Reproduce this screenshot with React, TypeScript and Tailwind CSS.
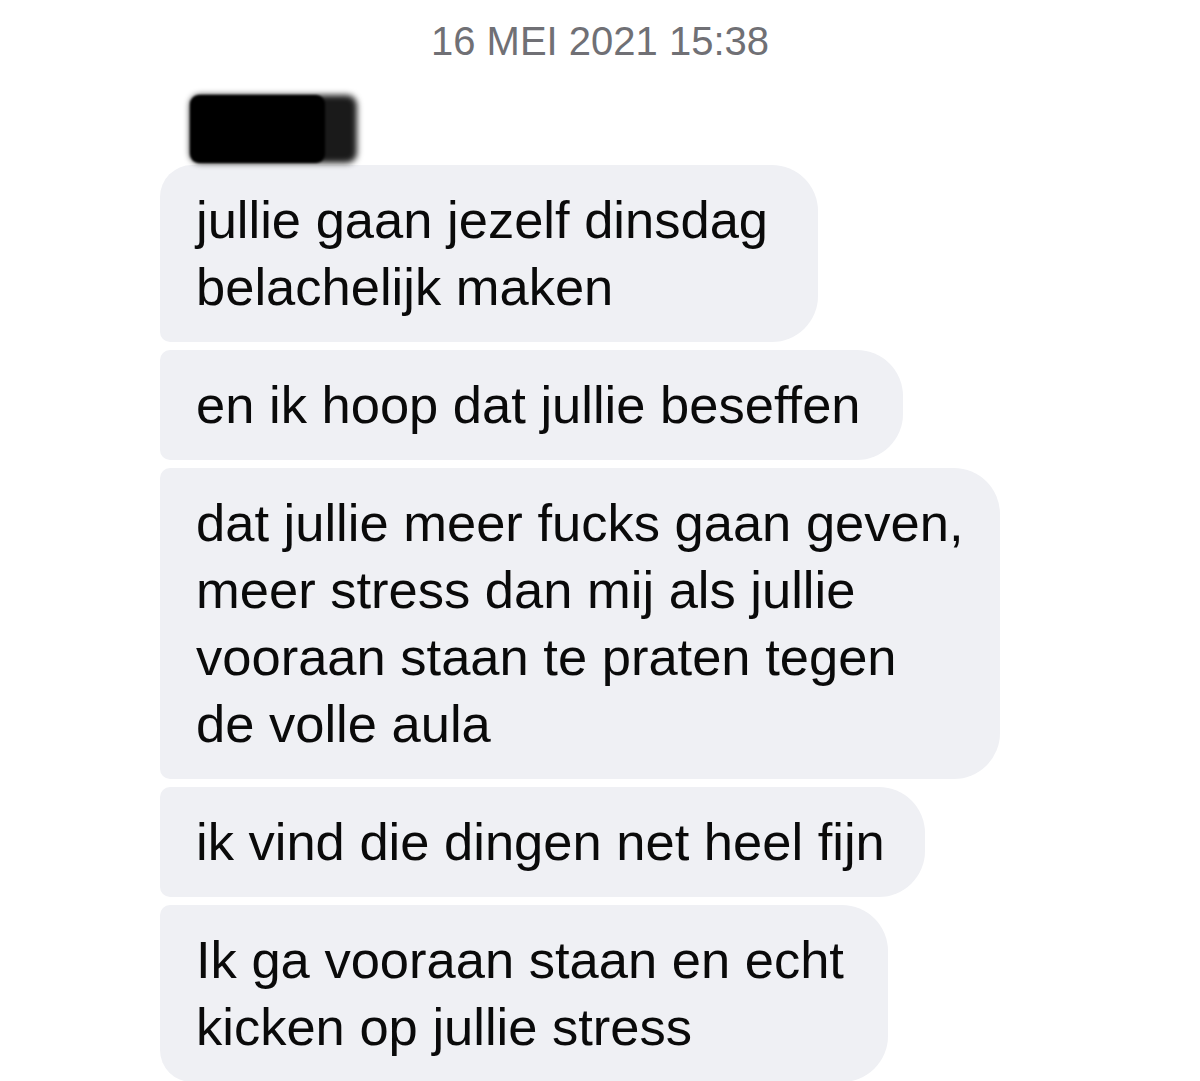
import React from 'react';

type Msg = {
  lines: string[];
  width: string;
  corners: string;
};

const messages: Msg[] = [
  {
    lines: ['jullie gaan jezelf dinsdag', 'belachelijk maken'],
    width: 'w-[658px]',
    corners: 'rounded-tl-[32px] rounded-tr-[46px] rounded-br-[46px] rounded-bl-[10px]',
  },
  {
    lines: ['en ik hoop dat jullie beseffen'],
    width: 'w-[743px]',
    corners: 'rounded-tl-[10px] rounded-tr-[46px] rounded-br-[46px] rounded-bl-[10px]',
  },
  {
    lines: [
      'dat jullie meer fucks gaan geven,',
      'meer stress dan mij als jullie',
      'vooraan staan te praten tegen',
      'de volle aula',
    ],
    width: 'w-[840px]',
    corners: 'rounded-tl-[10px] rounded-tr-[46px] rounded-br-[46px] rounded-bl-[10px]',
  },
  {
    lines: ['ik vind die dingen net heel fijn'],
    width: 'w-[765px]',
    corners: 'rounded-tl-[10px] rounded-tr-[46px] rounded-br-[46px] rounded-bl-[10px]',
  },
  {
    lines: ['Ik ga vooraan staan en echt', 'kicken op jullie stress'],
    width: 'w-[728px]',
    corners: 'rounded-tl-[10px] rounded-tr-[46px] rounded-br-[46px] rounded-bl-[32px]',
  },
];

const Bubble: React.FC<{ msg: Msg }> = ({ msg }) => (
  <div
    className={`${msg.width} ${msg.corners} bg-[#eff0f4] pl-[36px] pt-[21px] pb-[22px] text-[52.5px] leading-[67px] text-[#0a0a0a] whitespace-nowrap`}
  >
    {msg.lines.map((line, i) => (
      <div key={i}>{line}</div>
    ))}
  </div>
);

const App: React.FC = () => {
  return (
    <div className="h-[1081px] w-[1200px] overflow-hidden bg-white font-['Liberation_Sans',Arial,sans-serif]">
      <div className="pt-[19px] text-center text-[40px] leading-[44px] text-[#707075]">
        16 MEI 2021 15:38
      </div>

      {/* redacted sender name */}
      <div className="relative ml-[190px] mt-[32px] h-[68px] w-[167px]">
        <div className="absolute inset-0 rounded-[10px] bg-[#1a1a1a] blur-[3px]" />
        <div className="absolute left-0 top-0 h-[68px] w-[135px] rounded-[9px] bg-black blur-[1px]" />
      </div>

      <div className="mt-[2px] flex flex-col items-start gap-[8px] pl-[160px]">
        {messages.map((m, i) => (
          <Bubble key={i} msg={m} />
        ))}
      </div>
    </div>
  );
};

export default App;
